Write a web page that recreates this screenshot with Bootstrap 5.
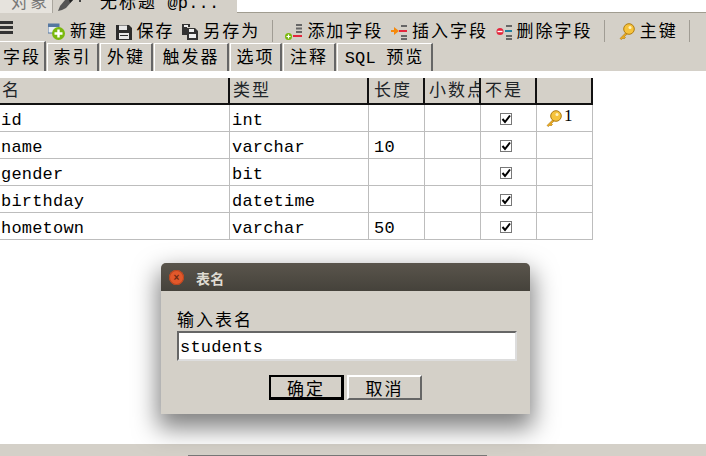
<!doctype html>
<html lang="zh"><head><meta charset="utf-8"><title>表名</title>
<link href="https://cdn.jsdelivr.net/npm/bootstrap@5.3.0/dist/css/bootstrap.min.css" rel="stylesheet">
<style>
html,body{height:100%}
body{width:706px;height:456px;overflow:hidden;background:#fff;color:#000;font:17px/1 "Liberation Mono","Noto Sans CJK SC",monospace;letter-spacing:.2px;position:relative}
.zh{letter-spacing:2px}
.top-strip{height:13px;overflow:hidden;background:#fff}
.top-grey{width:237px;height:13px;background:#d4d0c8;overflow:hidden;flex:none}
.obj-tab{width:53px;flex:none;background:#e6e3dd;color:#777;border-right:1px solid #aaa69e;padding-left:11px;line-height:17px;height:13px;overflow:hidden}
.obj-tab span,.file-tab span.lift{display:block;margin-top:-5px}
.file-tab{line-height:17px;white-space:nowrap}
.pencil{margin:0 18px 0 5px;flex:none}
.top-rest{height:13px;flex:1;border-bottom:1px solid #a09c90}
.tool-wrap{height:28px;background:#d4d0c8;padding-top:7px}
.burger{width:13px;flex:none;margin-top:1px}
.burger i{display:block;height:3px;background:#333;margin-bottom:2px}
.tool-list{gap:7.6px;margin-left:35px}
.tool{gap:5px;line-height:24px;white-space:nowrap}
.tool span{position:relative;top:2px}
.tool svg{flex:none;position:relative;top:1px}
.sep{width:1px;height:22px;background:#a09c94;margin:0 5px 0 4px}
.tab-row{height:30px;background:#d4d0c8;padding-top:2px}
.tabx{height:28px;background:#d4d0c8;border-top:1px solid #fff;border-left:1px solid #fff;border-right:2px solid #666;text-align:center;line-height:29px;margin-right:1px;white-space:nowrap}
.tabx.on{height:30px;margin-top:-2px;line-height:33px;border-left:0}
.grid-wrap{padding-top:7px}
.fields{table-layout:fixed;width:593px;border-collapse:separate;border-spacing:0;margin:0;--bs-table-bg:#fff}
.fields th{height:27px;background:#d4d0c8;font-weight:400;padding:2px 0 0 3px;border:0;border-right:2px solid #111;border-bottom:2px solid #111;overflow:hidden;white-space:nowrap;line-height:23px;box-shadow:none}
.fields th:first-child{padding-left:2px}
.fields th:nth-child(3){padding-left:5px}
.fields th:nth-child(4),.fields th:nth-child(5){padding-left:4px}
.fields td{height:27px;padding:5px 0 0 1px;border:0;border-right:1px solid #bdbdbd;border-bottom:1px solid #bdbdbd;vertical-align:middle;line-height:21px;white-space:nowrap;color:#000;box-shadow:none}
.fields td:nth-child(2){padding-left:2px}
.fields td:nth-child(3){padding-left:5px}
.check{width:12px;height:12px;border:1px solid #777;background:#fff;display:block;margin:0 0 3px 18px}
.key-cell{height:26px}
.key-one{margin:-6px 0 0 2px;font:17px/1 "Liberation Serif",serif}
.status{position:absolute;left:0;right:0;bottom:0;height:12px;background:#d4d0c8}
.status i{position:absolute;left:188px;width:299px;bottom:0;height:1px;background:#777}
.dlg{position:absolute;left:161px;top:263px;width:369px;height:151px;background:#d4d0c8;border-radius:5px 5px 0 0;box-shadow:0 11px 24px 3px rgba(0,0,0,.5)}
.dlg-title{height:28px;background:linear-gradient(#5a554c,#45423b);border-radius:5px 5px 0 0;color:#dfdbd2;font:700 14px/30px "Noto Sans CJK SC",sans-serif;padding-left:35px;position:relative}
.dlg-x{position:absolute;left:8px;top:7px;width:15px;height:15px;border-radius:50%;background:#e2582b;color:#6b2a13;font:700 10px/15px "Liberation Sans",sans-serif;text-align:center;box-shadow:inset 0 0 0 1px #b8451f}
.dlg-body{padding:18px 13px 0 16px}
.dlg-label{line-height:25px;height:22px}
.name-in{display:block;width:340px;height:30px;border:2px solid;border-color:#666 #ddd #ddd #666;background:#fff;padding:2px 1px 0;font:inherit;letter-spacing:inherit;color:#000;border-radius:0;outline:0}
.dlg-btns{gap:3px;margin-top:14px;padding-left:92px}
.dlg-btn{width:75px;height:25px;padding:4px 0 0;background:#d4d0c8;border:2px solid;border-color:#fff #666 #666 #fff;border-radius:0;font:inherit;color:#000;line-height:20px}
.dlg-btn.first{border:2px solid #000;border-right-width:3px;border-bottom-width:3px}
</style></head><body>
<div class="top-strip d-flex">
  <div class="top-grey d-flex">
    <div class="obj-tab"><span class="zh">对象</span></div>
    <svg class="pencil" width="24" height="11" viewBox="0 0 24 11"><path d="M0 11 2 6 7 0h8l-7 8-4 2z" fill="#555"/><path d="M11 0h4l-3 3z" fill="#222"/><rect x="21" y="0" width="2" height="2" fill="#444"/></svg>
    <div class="file-tab"><span class="lift"><span class="zh">无标题</span> @p...</span></div>
  </div>
  <div class="top-rest"></div>
</div>
<div class="tool-wrap d-flex">
  <div class="burger"><i></i><i></i><i></i></div>
  <div class="tool-list d-flex">
    <div class="tool d-flex align-items-center"><svg width="17" height="17" viewBox="0 0 17 17"><rect x="0" y="1" width="11" height="9" fill="#e8eef5" stroke="#5577a0"/><rect x="0" y="1" width="11" height="3" fill="#5577a0"/><circle cx="10.500" cy="10.500" r="6.500" fill="#7ab80e"/><path d="M10.500 6.500v8M6.500 10.500h8" stroke="#fff" stroke-width="2.400"/></svg><span class="zh">新建</span></div>
    <div class="tool d-flex align-items-center"><svg width="16" height="16" viewBox="0 0 16 16"><path d="M0 1h13l3 3v12H0z" fill="#2c2c2c"/><rect x="3" y="1.500" width="8" height="4.500" fill="#e8e8e8"/><rect x="3" y="9" width="10" height="6" fill="#e8e8e8"/><rect x="4" y="11" width="8" height="1" fill="#2c2c2c"/></svg><span class="zh">保存</span></div>
    <div class="tool d-flex align-items-center"><svg width="16" height="16" viewBox="0 0 16 16"><path d="M0 0h8v3H5v8H0z" fill="#333"/><rect x="2" y="1" width="4" height="2" fill="#eee"/><path d="M5 4h8l3 3v9H5z" fill="#333"/><rect x="7" y="5" width="5" height="3" fill="#eee"/><rect x="7" y="10" width="7" height="4" fill="#eee"/></svg><span class="zh">另存为</span></div>
    <div class="sep align-self-center"></div>
    <div class="tool d-flex align-items-center"><svg width="17" height="17" viewBox="0 0 17 17"><path d="M11 1h6v2h-6zM11 4.500h6v2h-6zM11 8h6v2h-6z" fill="#666"/><rect x="8" y="12" width="9" height="2" fill="#e3263c"/><circle cx="3.500" cy="13.500" r="3.500" fill="#7ab80e"/><path d="M3.500 11.500v4M1.500 13.500h4" stroke="#fff" stroke-width="1.200"/></svg><span class="zh">添加字段</span></div>
    <div class="tool d-flex align-items-center"><svg width="16" height="17" viewBox="0 0 16 17"><path d="M10 2h6v2h-6zM10 12h6v2h-6zM10 15h6v2h-6z" fill="#666"/><rect x="8" y="7" width="8" height="2" fill="#e3263c"/><path d="M0 7h3V4l5 4-5 4V9H0z" fill="#f5890c"/></svg><span class="zh">插入字段</span></div>
    <div class="tool d-flex align-items-center"><svg width="16" height="17" viewBox="0 0 16 17"><path d="M10 2h6v2h-6zM10 12h6v2h-6zM10 15h6v2h-6z" fill="#666"/><rect x="9" y="7" width="7" height="2" fill="#1f7f9e"/><circle cx="4" cy="8.500" r="3.500" fill="#e3263c"/><rect x="1.500" y="7.800" width="5" height="1.400" fill="#fff"/></svg><span class="zh">删除字段</span></div>
    <div class="sep align-self-center"></div>
    <div class="tool d-flex align-items-center"><svg width="17" height="17" viewBox="0 0 17 17"><path d="M9.500 8 2 15.500l1.500 1L5 15l1 1 1.500-1.500L6.500 13.500l4.300-4z" fill="#e8a820" stroke="#b07c10" stroke-width=".6"/><circle cx="11" cy="6" r="5.300" fill="#f6c33c" stroke="#b07c10"/><circle cx="12" cy="4.500" r="1.500" fill="#fff2c0"/></svg><span class="zh">主键</span></div>
    <div class="sep align-self-center"></div>
  </div>
</div>
<div class="tab-row d-flex">
  <div class="tabx on" style="width:46px"><span class="zh">字段</span></div>
  <div class="tabx" style="width:52px"><span class="zh">索引</span></div>
  <div class="tabx" style="width:53px"><span class="zh">外键</span></div>
  <div class="tabx" style="width:75px"><span class="zh">触发器</span></div>
  <div class="tabx" style="width:52px"><span class="zh">选项</span></div>
  <div class="tabx" style="width:53px"><span class="zh">注释</span></div>
  <div class="tabx" style="width:96px">SQL <span class="zh">预览</span></div>
</div>
<div class="grid-wrap">
<table class="table fields"><colgroup><col style="width:230px"><col style="width:139px"><col style="width:56px"><col style="width:56px"><col style="width:56px"><col style="width:56px"></colgroup>
<thead><tr><th><span class="zh">名</span></th><th><span class="zh">类型</span></th><th><span class="zh">长度</span></th><th><span class="zh">小数点</span></th><th><span class="zh">不是</span></th><th></th></tr></thead>
<tbody>
<tr><td>id</td><td>int</td><td></td><td></td><td><span class="check"><svg class="d-block" width="10" height="10" viewBox="0 0 10 10"><path d="M1.500 5 4 8l5-6.500" fill="none" stroke="#000" stroke-width="2"/></svg></span></td><td><div class="key-cell d-flex align-items-center" style="margin:-5px 0 0 7px"><svg width="17" height="17" viewBox="0 0 17 17"><path d="M9.500 8 2 15.500l1.500 1L5 15l1 1 1.500-1.500L6.500 13.500l4.300-4z" fill="#e8a820" stroke="#b07c10" stroke-width=".6"/><circle cx="11" cy="6" r="5.300" fill="#f6c33c" stroke="#b07c10"/><circle cx="12" cy="4.500" r="1.500" fill="#fff2c0"/></svg><span class="key-one">1</span></div></td></tr>
<tr><td>name</td><td>varchar</td><td>10</td><td></td><td><span class="check"><svg class="d-block" width="10" height="10" viewBox="0 0 10 10"><path d="M1.500 5 4 8l5-6.500" fill="none" stroke="#000" stroke-width="2"/></svg></span></td><td></td></tr>
<tr><td>gender</td><td>bit</td><td></td><td></td><td><span class="check"><svg class="d-block" width="10" height="10" viewBox="0 0 10 10"><path d="M1.500 5 4 8l5-6.500" fill="none" stroke="#000" stroke-width="2"/></svg></span></td><td></td></tr>
<tr><td>birthday</td><td>datetime</td><td></td><td></td><td><span class="check"><svg class="d-block" width="10" height="10" viewBox="0 0 10 10"><path d="M1.500 5 4 8l5-6.500" fill="none" stroke="#000" stroke-width="2"/></svg></span></td><td></td></tr>
<tr><td>hometown</td><td>varchar</td><td>50</td><td></td><td><span class="check"><svg class="d-block" width="10" height="10" viewBox="0 0 10 10"><path d="M1.500 5 4 8l5-6.500" fill="none" stroke="#000" stroke-width="2"/></svg></span></td><td></td></tr>
</tbody></table>
</div>
<div class="status"><i></i></div>
<div class="dlg">
  <div class="dlg-title"><span class="dlg-x">×</span>表名</div>
  <div class="dlg-body">
    <div class="dlg-label zh">输入表名</div>
    <input class="name-in" type="text" value="students">
    <div class="dlg-btns d-flex">
      <button class="dlg-btn first" type="button"><span class="zh">确定</span></button>
      <button class="dlg-btn" type="button"><span class="zh">取消</span></button>
    </div>
  </div>
</div>
</body></html>
